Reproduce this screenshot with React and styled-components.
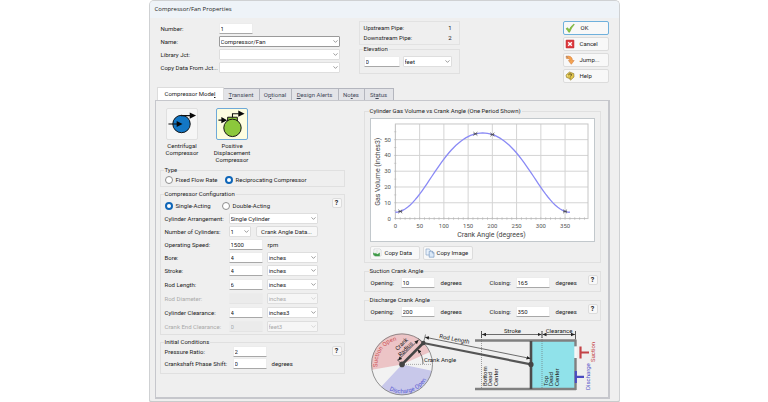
import React from "react";
import styled, { createGlobalStyle } from "styled-components";
import { ChevronDown } from "lucide-react";

const font = 'Roboto, "Liberation Sans", sans-serif';

const GlobalStyle = createGlobalStyle`
  *, *::before, *::after { box-sizing: border-box; }
  body { margin: 0; background: #fff; color: #1c1c1c; font: 6px/8px ${font}; }
  input, select, button { font: inherit; color: inherit; margin: 0; }
  fieldset { min-width: 0; margin: 0; }
  svg text { font-family: ${font}; }
`;

const Dialog = styled.main`
  width: 100%;
  max-width: 471px;
  margin: 0 auto;
  background: #efefef;
  border: 1px solid #cfd1d3;
  border-bottom: 2px solid #c9cbcc;
  border-radius: 5px 5px 3px 3px;
  overflow: hidden;
`;

const TitleBar = styled.h1`
  margin: 0;
  height: 17px;
  padding: 4px 5px;
  background: #eef3f8;
  font-family: "Open Sans", "Noto Sans", sans-serif;
  font-size: 6px;
  line-height: 8px;
  font-weight: 400;
`;

const Header = styled.section`
  display: flex;
  gap: 19px;
  padding: 3px 10px 0 11px;
`;

const HeaderForm = styled.div`
  display: grid;
  grid-template-columns: 58px 1fr;
  grid-auto-rows: 11px;
  row-gap: 2px;
  align-items: center;
  flex: 0 1 179px;
  padding-top: 2px;
`;

const HeaderSide = styled.div`
  flex: 0 1 101px;
`;

const Commands = styled.div`
  display: flex;
  flex-direction: column;
  gap: 2px;
  width: 46px;
  margin-left: auto;
`;

const Button = styled.button`
  display: flex;
  align-items: center;
  gap: ${(p) => p.$gap || 0}px;
  min-width: ${(p) => p.$min || 0}px;
  height: ${(p) => p.$height || 14}px;
  padding: 0 1px;
  background: #f8f8f8;
  border: 1px solid ${(p) => (p.$primary ? "#6fb0dc" : "#dcdcdc")};
  border-radius: 2px;
  white-space: nowrap;
  svg { flex: none; }
`;

const HelpBox = styled(Button)`
  justify-content: center;
  width: 10px;
  height: 10px;
  padding: 0;
  font-size: 7px;
  font-weight: 700;
`;

const PipeBox = styled.dl`
  display: grid;
  grid-template-columns: 1fr auto;
  row-gap: 2px;
  margin: 0;
  padding: 2px 7px 2px 4px;
  border: 1px solid #e2e2e2;
  dd { margin: 0; }
`;

const Group = styled.fieldset`
  position: relative;
  padding: ${(p) => p.$pad || "0"};
  border: 1px solid #e0e0e0;
  legend {
    height: 8px;
    margin-left: -1px;
    padding: 0 1px;
    white-space: nowrap;
  }
`;

const GroupHelp = styled.div`
  position: absolute;
  right: 2px;
  top: 0;
`;

const Label = styled.label`
  white-space: nowrap;
  color: ${(p) => (p.$dim ? "#aaa" : "inherit")};
`;

const TextInput = styled.input`
  width: ${(p) => p.$w || 34}px;
  height: 11px;
  padding: 0 1px;
  background: ${(p) => (p.disabled ? "#ebebeb" : "#fff")};
  color: ${(p) => (p.disabled ? "#aaa" : "inherit")};
  border: 1px solid #ececec;
  border-bottom-color: ${(p) => (p.disabled ? "#e4e4e4" : "#a8a8a8")};
  border-radius: 1px;
`;

const SelectWrap = styled.span`
  display: grid;
  align-items: center;
  width: ${(p) => (p.$w ? `${p.$w}px` : "100%")};
  > * { grid-area: 1 / 1; }
  svg {
    justify-self: end;
    margin-right: 1px;
    pointer-events: none;
    color: ${(p) => (p.$dim ? "#c0c0c0" : "#555")};
  }
`;

const NativeSelect = styled.select`
  appearance: none;
  width: 100%;
  height: 11px;
  padding: 0 1px;
  background: ${(p) => (p.disabled ? "#f6f6f6" : "#fff")};
  color: ${(p) => (p.disabled ? "#aaa" : "inherit")};
  opacity: 1;
  border: 1px solid ${(p) => (p.$strong ? "#9a9a9a" : "#dedede")};
  border-radius: 1px;
`;

function Select({ w, strong, disabled, value, ...rest }) {
  return (
    <SelectWrap $w={w} $dim={disabled}>
      <NativeSelect $strong={strong} disabled={disabled} {...rest}>
        <option>{value}</option>
      </NativeSelect>
      <ChevronDown size={7} />
    </SelectWrap>
  );
}

const Tabs = styled.nav`
  display: flex;
  align-items: flex-end;
  height: 13px;
  margin: 4px 0 0 7px;
`;

const Tab = styled.button`
  flex: 0 0 auto;
  width: ${(p) => p.$w}px;
  height: ${(p) => (p.$active ? 13 : 12)}px;
  padding: 0;
  background: ${(p) => (p.$active ? "#fff" : "#e3e4e8")};
  color: ${(p) => (p.$active ? "#1c1c1c" : "#444a5a")};
  border: 1px solid ${(p) => (p.$active ? "#dcdcdc" : "#b4b6be")};
  border-left-width: ${(p) => (p.$active ? 1 : 0)}px;
  border-bottom: 0;
  white-space: nowrap;
`;

const Panel = styled.section`
  display: grid;
  grid-template-columns: 185fr 237fr;
  column-gap: 19px;
  margin: 0 9px 2px 5px;
  padding: 6px 7px 0 4px;
  border: 1px solid #c6c7cc;
  border-right-width: 2px;
  border-bottom-width: 2px;
`;

const Column = styled.div`
  display: flex;
  flex-direction: column;
  gap: ${(p) => p.$gap}px;
  min-width: 0;
`;

const Models = styled.div`
  display: flex;
  align-items: flex-start;
  gap: 5px;
  height: 56px;
  padding-top: 1px;
`;

const ModelButton = styled.button`
  display: flex;
  flex-direction: column;
  align-items: center;
  gap: 2px;
  width: 45px;
  padding: 0;
  border: 0;
  background: none;
  line-height: 7px;
`;

const ModelTile = styled.span`
  display: block;
  width: 32px;
  height: 32px;
  background: ${(p) => (p.$on ? "#fdfde0" : "#f6f6f6")};
  border: 1px solid ${(p) => (p.$on ? "#6fa9d8" : "#e0e0e0")};
  border-radius: 2px;
`;

const RadioRow = styled.div`
  display: grid;
  grid-template-columns: ${(p) => p.$cols};
  align-items: center;
  height: 11px;
`;

const RadioLabel = styled.label`
  display: flex;
  align-items: center;
  gap: 3px;
  white-space: nowrap;
`;

const Radio = styled.input.attrs({ type: "radio" })`
  appearance: none;
  width: 8px;
  height: 8px;
  border-radius: 50%;
  background: #fff;
  border: 1px solid #8d8d8d;
  &:checked { border: 2px solid #0f66b8; }
`;

const Rows = styled.div`
  display: grid;
  grid-template-columns: ${(p) => p.$label}px 34px 1fr;
  grid-auto-rows: 11px;
  column-gap: 4px;
  row-gap: ${(p) => p.$gap}px;
  align-items: center;
  margin-top: ${(p) => p.$top}px;
`;

const Unit = styled.span`
  padding-left: ${(p) => p.$indent || 1}px;
`;

const Span2 = styled.div`
  grid-column: 2 / 4;
  display: flex;
  gap: 5px;
`;

const WideButton = styled(Button)`
  justify-content: center;
  width: 62px;
`;

const Inline = styled.div`
  display: flex;
  align-items: center;
  gap: 3px;
`;

const AngleRow = styled.div`
  display: grid;
  grid-template-columns: 30px 34px 1fr 26px 34px 50px;
  align-items: center;
  height: 11px;
  padding-left: 1px;
`;

const ChartSvg = styled.svg`
  display: block;
  width: 100%;
  background: #fff;
  border: 1px solid #c2c8cc;
`;

const Copies = styled.div`
  display: flex;
  gap: 3px;
  margin-top: 4px;
`;

const Diagram = styled.svg`
  display: block;
  width: 100%;
`;

const CheckIcon = () => (
  <svg width="10" height="10" viewBox="0 0 10 10">
    <path d="M1 5.8 2.5 4.7 4.2 6.8Q5.8 3.2 8.8 1L9.3 1.6Q6.5 4.6 4.6 9.2H3.7Q2.7 7.2 1 5.8Z" fill="#8cc63f" stroke="#5d9a28" strokeWidth=".5" />
  </svg>
);
const CancelIcon = () => (
  <svg width="10" height="10" viewBox="0 0 10 10">
    <rect x="1" y="1" width="8" height="8" rx=".5" fill="#dd3a3e" stroke="#b92b30" strokeWidth=".5" />
    <path d="M3.2 3.2 6.8 6.8M6.8 3.2 3.2 6.8" stroke="#fff" strokeWidth="1.4" />
  </svg>
);
const JumpIcon = () => (
  <svg width="10" height="10" viewBox="0 0 10 10">
    <path d="M1 1.2Q7.2.2 7.5 5.5H9.2L6.3 9.3 3.4 5.5H5.1Q5 3.2 1.4 3.4Z" fill="#f5a350" stroke="#cf7430" strokeWidth=".5" />
    <path d="M1.2 1.2 3 2.8" stroke="#8d8590" strokeWidth=".8" />
  </svg>
);
const HelpIcon = () => (
  <svg width="10" height="10" viewBox="0 0 10 10">
    <path d="M1 4 4.5 1 8.8 2.6 9 6 5.5 9.2 4.3 7.4 1.5 6.4Z" fill="#e3c74d" stroke="#8a7630" strokeWidth=".6" />
    <path d="M3.4 3.8Q4.8 2.2 6.4 3.2 7 4.6 5.3 5.3M5.2 6.6V7.5" fill="none" stroke="#544a24" strokeWidth=".9" />
    <path d="M1.8 4.4 3 5.2" stroke="#fff6b8" strokeWidth=".8" />
  </svg>
);
const CopyDataIcon = () => (
  <svg width="10" height="10" viewBox="0 0 10 10">
    <path d="M2 1H8L9 2V8H2Z" fill="#fff" stroke="#b9bec3" strokeWidth=".5" />
    <path d="M3 3H8M3 5H8M5 2V8" stroke="#c7d3c7" strokeWidth=".5" />
    <path d="M1 4.6 3.4 5.8V4.8L5.4 6.2 7.8 4.6V8.2H3.4L1.4 7Z" fill="#3f9b48" />
  </svg>
);
const CopyImageIcon = () => (
  <svg width="10" height="10" viewBox="0 0 10 10">
    <path d="M1 1H4.2L5.6 2.4V7H1Z" fill="#e8f1fb" stroke="#7e9cc0" strokeWidth=".6" />
    <path d="M4.2 3.2H7.4L9 4.8V9.2H4.2Z" fill="#dbe9f8" stroke="#6d8fb8" strokeWidth=".6" />
    <path d="M7.3 3.2V5H9" fill="none" stroke="#6d8fb8" strokeWidth=".6" />
  </svg>
);

const Centrifugal = () => (
  <svg width="30" height="30" viewBox="0 0 30 31">
    <circle cx="14.5" cy="15.5" r="9" fill="#1377c5" stroke="#111" />
    <path d="M14 6.8H24M1 15.5H10" stroke="#111" strokeWidth="1.2" />
    <path d="M23 3.6 29.5 6.8 23 10ZM9.5 12.4 15.5 15.5 9.5 18.6Z" fill="#080808" />
  </svg>
);
const Positive = () => (
  <svg width="30" height="30" viewBox="0 0 30 31">
    <path d="M10.5 8.5H20.5V13H10.5Z" fill="#8cc83c" stroke="#111" />
    <circle cx="15.5" cy="19.5" r="9" fill="#8cc83c" stroke="#111" />
    <path d="M15.5 8.5V5H22M1 11.5H5" fill="none" stroke="#111" strokeWidth="1.1" />
    <path d="M21.5 1.5 28 4.8 21.5 8ZM4 8.3 10 11.5 4 14.7Z" fill="#080808" />
  </svg>
);

/* Slider-crank kinematics: 2 in crank, 6 in rod, 4 in bore, 4 in³ clearance. */
const volume = (deg) => {
  const t = (deg * Math.PI) / 180;
  return 4 + 4 * Math.PI * (8 - 2 * Math.cos(t) - Math.sqrt(36 - 4 * Math.sin(t) ** 2));
};
const px = (deg) => 24.5 + deg * 0.487;
const py = (v) => 100 - v * 1.585;
const curve = Array.from({ length: 73 }, (_, i) => `${px(i * 5)},${py(volume(i * 5))}`).join(" ");

function VolumeChart() {
  const xs = [0, 50, 100, 150, 200, 250, 300, 350];
  const ys = [0, 10, 20, 30, 40, 50];
  return (
    <ChartSvg viewBox="0 0 224 123" role="img" aria-label="Cylinder gas volume against crank angle">
      <g stroke="#d4d4d4" strokeWidth="1" fill="none">
        {xs.map((x) => <path key={x} d={`M${px(x)} 5V100`} />)}
        {ys.map((y) => <path key={y} d={`M24.5 ${py(y)}H218`} />)}
        <rect x="24.5" y="5" width="193.5" height="95" stroke="#c6c6c6" />
      </g>
      <g stroke="#b0b0b0" strokeWidth=".5">
        {Array.from({ length: 40 }, (_, i) => <path key={i} d={`M${px(i * 10)} 98.5V101.5`} />)}
        {Array.from({ length: 12 }, (_, i) => <path key={i} d={`M23 ${py(i * 5)}H25.5`} />)}
      </g>
      <g fontSize="6" fill="#555" textAnchor="middle">
        {xs.map((x) => <text key={x} x={px(x)} y="109">{x}</text>)}
      </g>
      <g fontSize="6" fill="#555" textAnchor="end">
        {ys.map((y) => <text key={y} x="20" y={py(y) + 2}>{y}</text>)}
      </g>
      <g fontSize="7" fill="#444" textAnchor="middle">
        <text x="121" y="119">Crank Angle (degrees)</text>
        <text transform="translate(9 53) rotate(-90)">Gas Volume (inches3)</text>
      </g>
      <polyline points={curve} fill="none" stroke="#8a8af5" strokeWidth="1.3" />
      {[10, 165, 200, 350].map((d) => (
        <path key={d} transform={`translate(${px(d)} ${py(volume(d))})`} d="M-2-1.8 2 1.8M-2 1.8 2-1.8M-2 0H2" stroke="#444" strokeWidth=".7" />
      ))}
    </ChartSvg>
  );
}

function CrankDiagram() {
  const arrows = { markerStart: "url(#arrow)", markerEnd: "url(#arrow)" };
  return (
    <Diagram viewBox="364 324 237 72" role="img" aria-label="Crank and cylinder geometry">
      <defs>
        <path id="arcTop" d="M377.6 366A24.5 24.5 0 0 1 424.4 353.4" />
        <path id="arcBottom" d="M389.3 389.3A28.8 28.8 0 0 0 430.4 368.4" />
        <marker id="arrow" viewBox="0 0 4 4" refX="4" refY="2" markerWidth="4" markerHeight="4" markerUnits="userSpaceOnUse" orient="auto-start-reverse">
          <path d="M0 .2 4 2 0 3.8Z" fill="#222" />
        </marker>
      </defs>
      <circle cx="402" cy="363.4" r="30.5" fill="#f2f2f2" />
      <path d="M402 363.4 371.9 368.7A30.5 30.5 0 0 1 429.9 351Z" fill="#ecc4c6" />
      <path d="M402 363.4 431.8 369.7A30.5 30.5 0 0 1 381.2 385.7Z" fill="#c8c8ea" />
      <circle cx="402" cy="363.4" r="30.5" fill="none" stroke="#777" strokeWidth=".8" />
      <text fontSize="6" fill="#cc5054"><textPath href="#arcTop">Suction Open</textPath></text>
      <text fontSize="6" fill="#5a5ad2"><textPath href="#arcBottom">Discharge Open</textPath></text>

      <rect x="531" y="340" width="45" height="48" fill="#90e2ea" />
      <path d="M475 339.5H576M475 388H576" stroke="#808080" strokeWidth="2.4" />
      <path d="M575.5 338.5V345.5M575.5 357V389" stroke="#808080" strokeWidth="2.4" />
      <path d="M575.5 345.5V357" stroke="#f6f6f6" strokeWidth="2.4" />
      <path d="M531 340V388" stroke="#4c4c4c" strokeWidth="2.6" />
      <path d="M481.5 330V388M542 330V388" stroke="#666" strokeWidth=".6" strokeDasharray="1 1" />
      <path d="M481.5 330V337M542 330V337M575.5 330V338" stroke="#333" strokeWidth=".8" />
      <g stroke="#333" strokeWidth=".7" fill="none">
        <path d="M482 333.5H541.5" {...arrows} />
        <path d="M542.5 333.5H575" {...arrows} />
        <path d="M425 336.2 530.5 357.5" {...arrows} />
        <path d="M398 359.5 418.5 339" {...arrows} />
        <path d="M417.5 348.5A21 21 0 0 1 423 363" markerStart="url(#arrow)" />
      </g>
      <path d="M397 358.5 402 363.4M418 337.5 423 342M423.5 342 425.5 333.5" stroke="#555" strokeWidth=".7" />
      <path d="M402 363.4H432" stroke="#777" strokeWidth=".6" strokeDasharray="1 1" />
      <path d="M423.3 342 531 363.4" stroke="#555" strokeWidth="2.2" />
      <path d="M402 363.4 423.3 342" stroke="#444" strokeWidth="2.6" />
      <g fill="#444">
        <circle cx="402" cy="363.4" r="2.8" />
        <circle cx="423.3" cy="342" r="2.2" />
        <circle cx="531" cy="363.4" r="2.6" />
      </g>

      <g fontSize="6" fill="#222">
        <text x="424" y="361">Crank Angle</text>
        <g textAnchor="middle">
          <text transform="translate(403 344.5) rotate(-46)">Crank</text>
          <text transform="translate(407 349.5) rotate(-46)">Radius</text>
          <text transform="translate(454 340) rotate(11)">Rod Length</text>
          <text x="512.5" y="332">Stroke</text>
          <text x="559" y="332">Clearance</text>
        </g>
        <text transform="translate(487 385) rotate(-90)">Bottom</text>
        <text transform="translate(492 385) rotate(-90)">Dead</text>
        <text transform="translate(498 385) rotate(-90)">Center</text>
        <text transform="translate(548 385) rotate(-90)">Top</text>
        <text transform="translate(553 385) rotate(-90)">Dead</text>
        <text transform="translate(559 385) rotate(-90)">Center</text>
      </g>
      <path d="M580.5 345.5V357.5M580.5 351.5H589" stroke="#c44347" strokeWidth="2.2" />
      <path d="M575.8 370V382M576 375.8H584" stroke="#4a4ac0" strokeWidth="2.2" />
      <text transform="translate(595 361) rotate(-90)" fontSize="6" fill="#c44347">Suction</text>
      <text transform="translate(590 389) rotate(-90)" fontSize="6" fill="#5050c8">Discharge</text>
    </Diagram>
  );
}

function Measure({ id, label, value, unit, disabled }) {
  return (
    <>
      <Label htmlFor={id} $dim={disabled}>{label}</Label>
      <TextInput id={id} defaultValue={value} disabled={disabled} />
      <Select w={51} value={unit} disabled={disabled} aria-label={`${label} unit`} />
    </>
  );
}

function AngleGroup({ title, id, open, close }) {
  return (
    <Group $pad="2px 0 3px 5px">
      <legend>{title}</legend>
      <AngleRow>
        <Label htmlFor={`${id}-open`}>Opening:</Label>
        <TextInput id={`${id}-open`} defaultValue={open} />
        <Unit $indent={6}>degrees</Unit>
        <Label htmlFor={`${id}-close`}>Closing:</Label>
        <TextInput id={`${id}-close`} defaultValue={close} />
        <Unit $indent={6}>degrees</Unit>
      </AngleRow>
      <GroupHelp><HelpBox aria-label={`${title} help`}>?</HelpBox></GroupHelp>
    </Group>
  );
}

export default function App() {
  return (
    <>
      <GlobalStyle />
      <Dialog>
        <TitleBar>Compressor/Fan Properties</TitleBar>
        <Header>
          <HeaderForm>
            <Label htmlFor="number">Number:</Label>
            <TextInput id="number" defaultValue="1" />
            <Label htmlFor="name">Name:</Label>
            <Select id="name" strong value="Compressor/Fan" />
            <Label htmlFor="library">Library Jct:</Label>
            <Select id="library" value="" />
            <Label htmlFor="copyfrom">Copy Data From Jct...</Label>
            <Select id="copyfrom" value="" />
          </HeaderForm>
          <HeaderSide>
            <PipeBox>
              <dt>Upstream Pipe:</dt><dd>1</dd>
              <dt>Downstream Pipe:</dt><dd>2</dd>
            </PipeBox>
            <Group $pad="3px 4px 6px">
              <legend>Elevation</legend>
              <Inline>
                <TextInput $w={36} aria-label="Elevation" defaultValue="0" />
                <Select w={49} value="feet" aria-label="Elevation unit" />
              </Inline>
            </Group>
          </HeaderSide>
          <Commands>
            <Button $primary $gap={6}><CheckIcon />OK</Button>
            <Button $gap={5}><CancelIcon />Cancel</Button>
            <Button $gap={5}><JumpIcon />Jump...</Button>
            <Button $gap={5}><HelpIcon />Help</Button>
          </Commands>
        </Header>
        <Tabs>
          <Tab $active $w={67}>Compressor Mode<u>l</u></Tab>
          <Tab $w={36}><u>T</u>ransient</Tab>
          <Tab $w={32}>O<u>p</u>tional</Tab>
          <Tab $w={47}><u>D</u>esign Alerts</Tab>
          <Tab $w={26}>No<u>t</u>es</Tab>
          <Tab $w={29}>St<u>a</u>tus</Tab>
        </Tabs>
        <Panel>
          <Column $gap={3}>
            <Models>
              <ModelButton><ModelTile><Centrifugal /></ModelTile><span>Centrifugal<br />Compressor</span></ModelButton>
              <ModelButton><ModelTile $on><Positive /></ModelTile><span>Positive<br />Displacement<br />Compressor</span></ModelButton>
            </Models>
            <Group $pad="0 4px 1px">
              <legend>Type</legend>
              <RadioRow $cols="60px 1fr">
                <RadioLabel><Radio name="type" />Fixed Flow Rate</RadioLabel>
                <RadioLabel><Radio name="type" defaultChecked />Reciprocating Compressor</RadioLabel>
              </RadioRow>
            </Group>
            <Group $pad="2px 4px 2px 4px">
              <legend>Compressor Configuration</legend>
              <RadioRow $cols="57px 1fr">
                <RadioLabel><Radio name="acting" defaultChecked />Single-Acting</RadioLabel>
                <RadioLabel><Radio name="acting" />Double-Acting</RadioLabel>
              </RadioRow>
              <Rows $gap={2} $top={2} $label={60}>
                <Label htmlFor="arrangement">Cylinder Arrangement:</Label>
                <Span2><Select id="arrangement" w={89} value="Single Cylinder" /></Span2>
                <Label htmlFor="cylinders">Number of Cylinders:</Label>
                <Span2>
                  <Select id="cylinders" w={22} value="1" />
                  <WideButton $height={11}>Crank Angle Data...</WideButton>
                </Span2>
                <Label htmlFor="speed">Operating Speed:</Label>
                <TextInput id="speed" defaultValue="1500" />
                <Unit>rpm</Unit>
                <Measure id="bore" label="Bore:" value="4" unit="inches" />
                <Measure id="stroke" label="Stroke:" value="4" unit="inches" />
              </Rows>
              <Rows $gap={3} $top={3} $label={60}>
                <Measure id="rod" label="Rod Length:" value="6" unit="inches" />
                <Measure id="roddia" label="Rod Diameter:" value="" unit="inches" disabled />
                <Measure id="clearance" label="Cylinder Clearance:" value="4" unit="inches3" />
                <Measure id="crankend" label="Crank End Clearance:" value="0" unit="feet3" disabled />
              </Rows>
              <GroupHelp><HelpBox aria-label="Configuration help">?</HelpBox></GroupHelp>
            </Group>
            <Group $pad="0 4px 4px 4px">
              <legend>Initial Conditions</legend>
              <Rows $gap={1} $top={0} $label={64}>
                <Label htmlFor="ratio">Pressure Ratio:</Label>
                <TextInput id="ratio" defaultValue="2" />
                <span />
                <Label htmlFor="phase">Crankshaft Phase Shift:</Label>
                <TextInput id="phase" defaultValue="0" />
                <Unit>degrees</Unit>
              </Rows>
              <GroupHelp><HelpBox aria-label="Initial conditions help">?</HelpBox></GroupHelp>
            </Group>
          </Column>
          <Column $gap={4}>
            <Group $pad="3px 5px 2px">
              <legend>Cylinder Gas Volume vs Crank Angle (One Period Shown)</legend>
              <VolumeChart />
              <Copies>
                <Button $min={50} $gap={3}><CopyDataIcon />Copy Data</Button>
                <Button $min={50} $gap={2}><CopyImageIcon />Copy Image</Button>
              </Copies>
            </Group>
            <AngleGroup id="suction" title="Suction Crank Angle" open="10" close="165" />
            <AngleGroup id="discharge" title="Discharge Crank Angle" open="200" close="350" />
            <CrankDiagram />
          </Column>
        </Panel>
      </Dialog>
    </>
  );
}
